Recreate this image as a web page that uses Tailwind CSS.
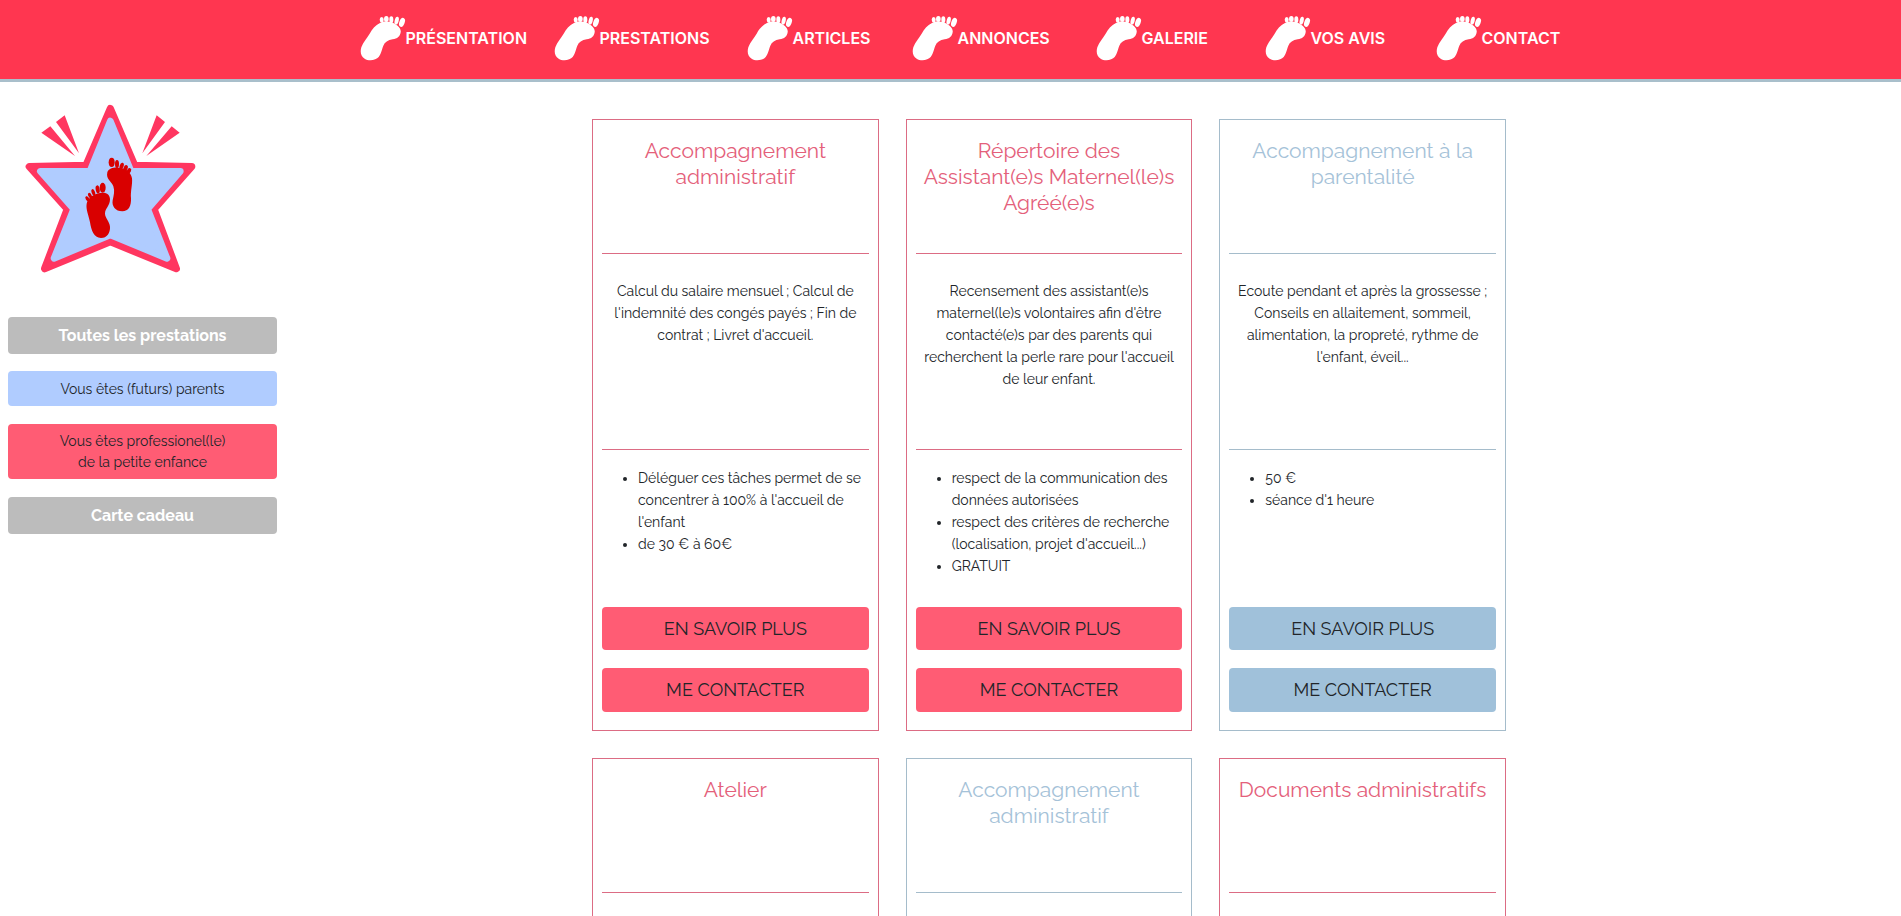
<!DOCTYPE html>
<html lang="fr">
<head>
<meta charset="utf-8">
<meta name="viewport" content="width=device-width, initial-scale=1">
<title>Prestations</title>
<script src="https://cdn.jsdelivr.net/npm/@tailwindcss/browser@4"></script>
</head>
<body class="bg-white text-[14px] leading-[22px] text-[#212529] font-[Raleway,Lato,sans-serif] oldstyle-nums overflow-x-hidden">
<svg class="hidden" aria-hidden="true">
  <symbol id="foot" viewBox="58 48 138 138">
    <path d="M118 72C128 66 150 66 162 74C172 80 182 88 180 100C178 113 170 119 156 121C142 123 132 130 128 140C122 155 122 164 114 174C106 184 84 187 72 179C60 172 58 158 62 145C68 128 79 118 87 104C94 91 104 79 118 72Z"/>
    <ellipse cx="123" cy="62" rx="6" ry="8"/><ellipse cx="137" cy="60" rx="7" ry="9"/><ellipse cx="152" cy="62" rx="6" ry="10"/>
    <ellipse cx="168" cy="65" rx="6" ry="12" transform="rotate(14 168 65)"/><ellipse cx="184" cy="70" rx="8" ry="14" transform="rotate(20 184 70)"/>
  </symbol>
</svg>

<header class="bg-[#ff3650] border-b-3 border-[#a9bfcb]">
  <nav class="h-[79px] pb-1 flex items-center justify-center pl-6 text-white text-[16px] font-semibold font-[Inter,sans-serif]" aria-label="Navigation principale">
    <a href="#" class="flex items-center w-[194px]"><svg class="size-[46px] shrink-0 fill-white"><use href="#foot"/></svg>PRÉSENTATION</a>
    <a href="#" class="flex items-center w-[193px]"><svg class="size-[46px] shrink-0 fill-white"><use href="#foot"/></svg>PRESTATIONS</a>
    <a href="#" class="flex items-center w-[165px]"><svg class="size-[46px] shrink-0 fill-white"><use href="#foot"/></svg>ARTICLES</a>
    <a href="#" class="flex items-center w-[184px]"><svg class="size-[46px] shrink-0 fill-white"><use href="#foot"/></svg>ANNONCES</a>
    <a href="#" class="flex items-center w-[169px]"><svg class="size-[46px] shrink-0 fill-white"><use href="#foot"/></svg>GALERIE</a>
    <a href="#" class="flex items-center w-[171px]"><svg class="size-[46px] shrink-0 fill-white"><use href="#foot"/></svg>VOS AVIS</a>
    <a href="#" class="flex items-center w-[130px]"><svg class="size-[46px] shrink-0 fill-white"><use href="#foot"/></svg>CONTACT</a>
  </nav>
</header>

<div class="flex items-start">
  <aside class="w-[285px] shrink-0 px-2 pt-[18px]">
    <a href="#" aria-label="Accueil" class="block ml-4">
      <svg class="w-[174px] h-[176px]" viewBox="72 60 522 528">
        <path d="M331 86L404 256L575 260L462 387L529 566L331 485L134 566L202 387L88 260L258 256Z" fill="#ff3660" stroke="#ff3660" stroke-width="22" stroke-linejoin="round"/>
        <path d="M331 123L393 273L541 274L443 387L501 535L331 465L162 535L221 387L121 274L270 273Z" fill="#b0ccff" stroke="#b0ccff" stroke-width="20" stroke-linejoin="round"/>
        <path d="M124 158L151 139L225 228ZM168 126L194 106L237 220ZM539 158L515 139L439 228ZM495 126L470 106L427 220Z" fill="#ff3660"/>
        <g fill="#d90000">
          <path d="M322 277C326 266 340 262 355 263C375 263 393 275 396 295C398 313 391 335 393 355C394 378 386 394 367 394C346 394 335 379 338 361C341 347 345 333 340 319C335 305 317 298 322 277Z"/>
          <ellipse cx="335" cy="247" rx="9" ry="14"/><ellipse cx="351" cy="252" rx="6" ry="12"/><ellipse cx="365" cy="258" rx="6" ry="10" transform="rotate(18 365 258)"/><ellipse cx="377" cy="264" rx="6" ry="9" transform="rotate(22 377 264)"/><ellipse cx="387" cy="272" rx="6" ry="8" transform="rotate(30 387 272)"/>
          <path d="M330 358C330 343 318 335 300 339C281 342 264 353 260 371C257 388 266 405 270 427C274 451 281 474 303 474C321 474 331 458 330 440C329 424 316 415 315 401C315 386 330 377 330 358Z"/>
          <ellipse cx="308" cy="323" rx="9" ry="15"/><ellipse cx="293" cy="328" rx="6" ry="12" transform="rotate(-10 293 328)"/><ellipse cx="280" cy="337" rx="5" ry="10" transform="rotate(-20 280 337)"/><ellipse cx="270" cy="347" rx="5" ry="9" transform="rotate(-25 270 347)"/><ellipse cx="262" cy="356" rx="5" ry="8" transform="rotate(-30 262 356)"/>
        </g>
      </svg>
    </a>
    <div class="mt-[41px] flex flex-col gap-[18px]">
      <button type="button" class="rounded bg-[#bcbcbc] h-[37px] text-white text-[16px] font-bold">Toutes les prestations</button>
      <button type="button" class="rounded bg-[#b0ccff] h-[35px] -mt-px">Vous êtes (futurs) parents</button>
      <button type="button" class="rounded bg-[#ff5c74] h-[55px] leading-[21px]">Vous êtes professionel(le)<br>de la petite enfance</button>
      <button type="button" class="rounded bg-[#bcbcbc] h-[37px] text-white text-[16px] font-bold">Carte cadeau</button>
    </div>
  </aside>

  <main class="flex-1 h-[834px] overflow-hidden pt-[37px] pr-[88px]">
    <div class="w-full max-w-[914px] mx-auto grid grid-cols-3 gap-[27px]">
      <article class="border border-[#dc6c84] px-[9px] pb-[18px] flex flex-col text-center">
        <h2 class="h-[133px] pt-[18px] text-[21px] leading-[26px] text-[#e4607a]">Accompagnement administratif</h2>
        <p class="h-[196px] border-t border-[#dc6c84] pt-[26px] px-1">Calcul du salaire mensuel ; Calcul de l'indemnité des congés payés ; Fin de contrat ; Livret d'accueil.</p>
        <ul class="h-[158px] border-t border-[#dc6c84] pt-[17px] pl-9 list-disc text-left">
          <li>Déléguer ces tâches permet de se concentrer à 100% à l'accueil de l'enfant</li><li>de 30 € à 60€</li>
        </ul>
        <a href="#" class="rounded bg-[#ff5c74] h-[43px] flex items-center justify-center text-[18px]">EN SAVOIR PLUS</a>
        <a href="#" class="rounded bg-[#ff5c74] h-[44px] mt-[18px] flex items-center justify-center text-[18px]">ME CONTACTER</a>
      </article>
      <article class="border border-[#dc6c84] px-[9px] pb-[18px] flex flex-col text-center">
        <h2 class="h-[133px] pt-[18px] text-[21px] leading-[26px] text-[#e4607a]">Répertoire des Assistant(e)s Maternel(le)s Agréé(e)s</h2>
        <p class="h-[196px] border-t border-[#dc6c84] pt-[26px] px-1">Recensement des assistant(e)s maternel(le)s volontaires afin d'être contacté(e)s par des parents qui recherchent la perle rare pour l'accueil de leur enfant.</p>
        <ul class="h-[158px] border-t border-[#dc6c84] pt-[17px] pl-9 list-disc text-left">
          <li>respect de la communication des données autorisées</li><li>respect des critères de recherche (localisation, projet d'accueil...)</li><li>GRATUIT</li>
        </ul>
        <a href="#" class="rounded bg-[#ff5c74] h-[43px] flex items-center justify-center text-[18px]">EN SAVOIR PLUS</a>
        <a href="#" class="rounded bg-[#ff5c74] h-[44px] mt-[18px] flex items-center justify-center text-[18px]">ME CONTACTER</a>
      </article>
      <article class="border border-[#a5bccb] px-[9px] pb-[18px] flex flex-col text-center">
        <h2 class="h-[133px] pt-[18px] text-[21px] leading-[26px] text-[#a5c2d8]">Accompagnement à la parentalité</h2>
        <p class="h-[196px] border-t border-[#a5bccb] pt-[26px] px-1">Ecoute pendant et après la grossesse ; Conseils en allaitement, sommeil, alimentation, la propreté, rythme de l'enfant, éveil...</p>
        <ul class="h-[158px] border-t border-[#a5bccb] pt-[17px] pl-9 list-disc text-left">
          <li>50 €</li><li>séance d'1 heure</li>
        </ul>
        <a href="#" class="rounded bg-[#a0c1da] h-[43px] flex items-center justify-center text-[18px]">EN SAVOIR PLUS</a>
        <a href="#" class="rounded bg-[#a0c1da] h-[44px] mt-[18px] flex items-center justify-center text-[18px]">ME CONTACTER</a>
      </article>
      <article class="border border-[#dc6c84] px-[9px] text-center">
        <h2 class="h-[133px] pt-[18px] text-[21px] leading-[26px] text-[#e4607a]">Atelier</h2>
        <div class="h-[196px] border-t border-[#dc6c84]"></div>
      </article>
      <article class="border border-[#a5bccb] px-[9px] text-center">
        <h2 class="h-[133px] pt-[18px] text-[21px] leading-[26px] text-[#a5c2d8]">Accompagnement administratif</h2>
        <div class="h-[196px] border-t border-[#a5bccb]"></div>
      </article>
      <article class="border border-[#dc6c84] px-[9px] text-center">
        <h2 class="h-[133px] pt-[18px] text-[21px] leading-[26px] text-[#e4607a]">Documents administratifs</h2>
        <div class="h-[196px] border-t border-[#dc6c84]"></div>
      </article>
    </div>
  </main>
</div>
</body>
</html>
